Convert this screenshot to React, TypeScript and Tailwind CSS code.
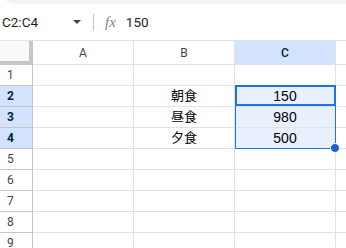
import React from "react";

const rows = [
  { n: 1, b: "", c: "" },
  { n: 2, b: "朝食", c: "150" },
  { n: 3, b: "昼食", c: "980" },
  { n: 4, b: "夕食", c: "500" },
  { n: 5, b: "", c: "" },
  { n: 6, b: "", c: "" },
  { n: 7, b: "", c: "" },
  { n: 8, b: "", c: "" },
  { n: 9, b: "", c: "" },
];

export default function App() {
  return (
    <div className="relative w-[346px] h-[248px] overflow-hidden bg-white font-['Liberation_Sans','Noto_Sans_CJK_JP',sans-serif] text-black">
      <div className="h-[20px] -mt-[16px] rounded-bl-[16px] bg-[#f0f4f9]" />
      <div className="h-[37px] flex items-center border-b border-[#e1e1e1]">
        <div className="w-[72px] pl-[2px] text-[13.5px] text-[#1f1f1f] font-['Roboto',sans-serif]">C2:C4</div>
        <svg width="8" height="4" viewBox="0 0 8 4" className="ml-[1px]">
          <path d="M0 0 L8 0 L4 4 Z" fill="#444746" />
        </svg>
        <div className="ml-[12px] w-px h-[17px] bg-[#c4c7c5]" />
        <div className="ml-[11px] text-[15px] italic text-[#80868b] font-['Liberation_Serif',serif] leading-none">fx</div>
        <div className="ml-[10px] text-[13.5px] text-[#1f1f1f] font-['Roboto',sans-serif]">150</div>
      </div>
      <div className="flex h-[24px] font-['Roboto',sans-serif] text-[12px] text-[#444746]">
        <div className="w-[33px] h-full bg-[#f8f9fa] border-r-[4px] border-b-[4px] border-[#c4c7c5]" />
        <div className="w-[101px] h-full flex items-center justify-center border-r border-b border-[#e1e1e1]">A</div>
        <div className="w-[101px] h-full flex items-center justify-center border-r border-b border-[#e1e1e1]">B</div>
        <div className="w-[101px] h-full flex items-center justify-center border-r border-b border-[#e1e1e1] bg-[#d3e3fd] text-[#041e49] font-medium">C</div>
        <div className="flex-1 h-full border-b border-[#e1e1e1]" />
      </div>
      {rows.map((r) => {
        const sel = r.n >= 2 && r.n <= 4;
        return (
          <div key={r.n} className="flex h-[21px]">
            <div
              className={
                sel
                  ? "w-[33px] h-full flex items-center pl-[7px] border-r border-b border-[#c4c7c5] bg-[#d3e3fd] text-[#041e49] font-bold text-[12px] font-['Roboto',sans-serif]"
                  : "w-[33px] h-full flex items-center pl-[7px] border-r border-b border-[#c4c7c5] text-[#444746] text-[12px] font-['Roboto',sans-serif]"
              }
            >
              {r.n}
            </div>
            <div className="w-[101px] h-full border-r border-b border-[#e1e1e1]" />
            <div className="w-[101px] h-full flex items-center justify-center border-r border-b border-[#e1e1e1] text-[13px]">
              {r.b}
            </div>
            <div
              className={
                sel
                  ? "w-[101px] h-full flex items-center justify-center border-r border-b border-[#e1e1e1] bg-[#e8f0fe] text-[14px]"
                  : "w-[101px] h-full flex items-center justify-center border-r border-b border-[#e1e1e1] text-[14px]"
              }
            >
              {r.c}
            </div>
            <div className="flex-1 h-full border-b border-[#e1e1e1]" />
          </div>
        );
      })}
      <div className="absolute left-[235px] top-[85px] w-[101px] h-[64px] border border-[#1a73e8] pointer-events-none" />
      <div className="absolute left-[235px] top-[85px] w-[101px] h-[21px] border-2 border-[#1a73e8] pointer-events-none" />
      <div className="absolute left-[330px] top-[143px] w-[10px] h-[10px] rounded-full bg-[#1a5fd6] border border-white" />
    </div>
  );
}
